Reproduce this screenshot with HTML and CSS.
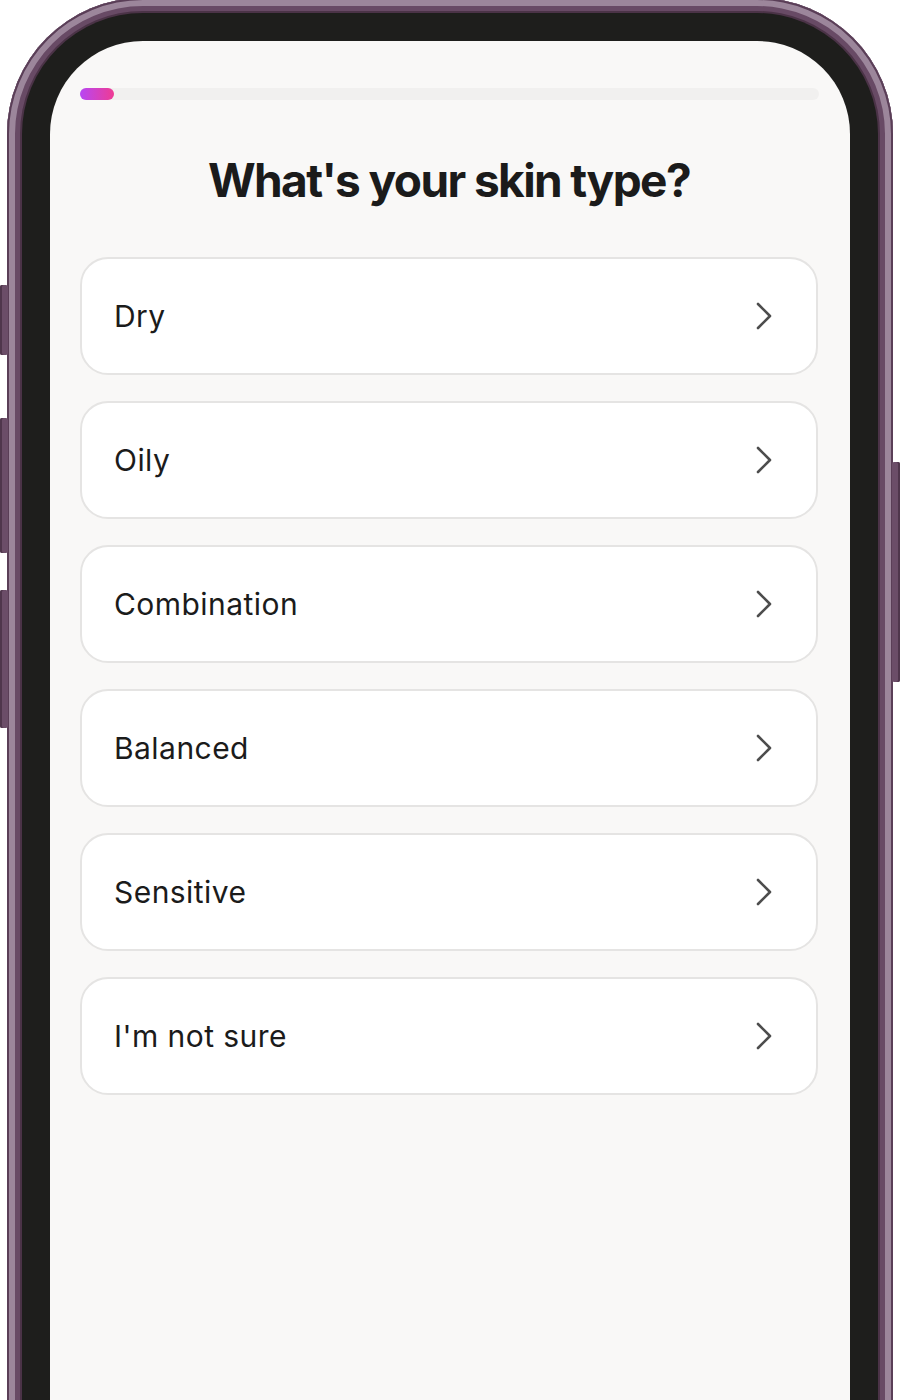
FILE: index.html
```html
<!DOCTYPE html>
<html lang="en">

<head>
    <meta charset="UTF-8">
    <meta name="viewport" content="width=device-width, initial-scale=1.0">
    <title>Skin quiz</title>
    <link rel="stylesheet" href="styles.css">
</head>

<body>
    <div class="device">
        <!-- hardware buttons -->
        <span class="side-btn mute"></span>
        <span class="side-btn vol-up"></span>
        <span class="side-btn vol-down"></span>
        <span class="side-btn power"></span>

        <div class="frame">
            <div class="bezel">
                <div class="screen">
                    <div class="progress">
                        <div class="progress-fill" style="width: 34px"></div>
                    </div>

                    <h1 class="question">What's your skin type?</h1>

                    <div class="options">
                        <button class="option">
                            <span>Dry</span>
                            <svg class="chevron" viewBox="0 0 18 30"><polyline points="3,3 15,15 3,27" /></svg>
                        </button>
                        <button class="option">
                            <span>Oily</span>
                            <svg class="chevron" viewBox="0 0 18 30"><polyline points="3,3 15,15 3,27" /></svg>
                        </button>
                        <button class="option">
                            <span>Combination</span>
                            <svg class="chevron" viewBox="0 0 18 30"><polyline points="3,3 15,15 3,27" /></svg>
                        </button>
                        <button class="option">
                            <span>Balanced</span>
                            <svg class="chevron" viewBox="0 0 18 30"><polyline points="3,3 15,15 3,27" /></svg>
                        </button>
                        <button class="option">
                            <span>Sensitive</span>
                            <svg class="chevron" viewBox="0 0 18 30"><polyline points="3,3 15,15 3,27" /></svg>
                        </button>
                        <button class="option">
                            <span>I'm not sure</span>
                            <svg class="chevron" viewBox="0 0 18 30"><polyline points="3,3 15,15 3,27" /></svg>
                        </button>
                    </div>
                </div>
            </div>
        </div>
    </div>
</body>

</html>
```

FILE: styles.css
```css
html,
body {
    margin: 0;
    padding: 0;
    height: 1400px;
    overflow: hidden;
}

body {
    background-color: #ffffff;
    font-family: 'Inter', 'Noto Sans', sans-serif;
}

.device {
    position: relative;  /* context for the side buttons */
    margin: -2px 0 0 7px;
    width: 886px;
}

.frame {
    padding: 15px 15px 0 15px;
    border-radius: 136px 136px 0 0;
    background-color: #4b3347;
    box-shadow: inset 0 0 0 2px #5a3e57,
        inset 0 0 0 8px #9c869b,
        inset 0 0 0 13px #684a65;
}

.bezel {
    padding: 28px 28px 0 28px;
    border-radius: 121px 121px 0 0;
    background-color: #1e1e1c;
}

.screen {
    height: 1420px;
    padding: 47px 32px 0 30px;
    border-radius: 93px 93px 0 0;
    background-color: #f9f8f7;
}

.side-btn {
    position: absolute;
    width: 8px;
    background-color: #6b4d68;
    border-radius: 2px;
    box-shadow: inset 2px 0 0 #4f364c;
}

.mute {
    left: -7px;
    top: 287px;
    height: 70px;
}

.vol-up {
    left: -7px;
    top: 420px;
    height: 135px;
}

.vol-down {
    left: -7px;
    top: 592px;
    height: 138px;
}

.power {
    right: -7px;
    top: 464px;
    height: 220px;
    box-shadow: inset -2px 0 0 #4f364c;
}

.progress {
    height: 12px;
    border-radius: 6px;
    background-color: #f1f0ef;
    margin-right: -1px;
}

.progress-fill {
    height: 12px;
    border-radius: 6px;
    background: linear-gradient(90deg, #b747f4, #ef3b93);
}

.question {
    margin: 53px 0 50px 0;
    font-size: 46px;
    line-height: 54px;
    font-weight: 700;
    letter-spacing: -1.6px;
    text-align: center;
    color: #1b1b1b;
}

.options {
    display: flex;
    flex-direction: column;
    gap: 26px;
}

.option {
    display: flex;
    align-items: center;
    justify-content: space-between;
    height: 118px;
    padding: 0 43px 0 32px;
    background-color: #ffffff;
    border: 2px solid #e5e4e3;
    border-radius: 28px;
    font-family: inherit;
    font-size: 30px;
    letter-spacing: 0.45px;
    color: #1b1b1b;
    text-align: left;
}

.chevron {
    width: 18px;
    height: 30px;
    fill: none;
    stroke: #4d4d4d;
    stroke-width: 2.6;
    stroke-linecap: round;
    stroke-linejoin: round;
}
```
